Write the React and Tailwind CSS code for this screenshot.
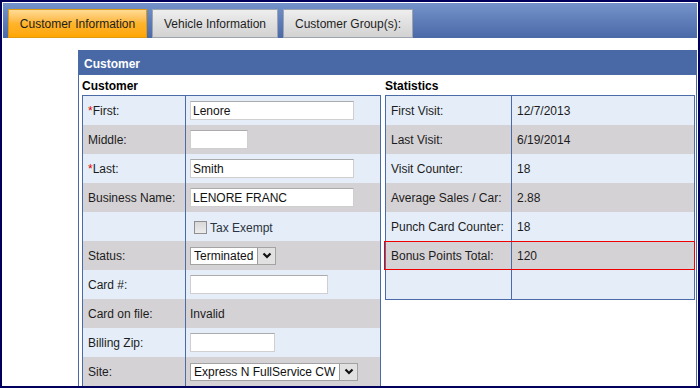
import React from "react";

const customerRows = [
  { label: "First:", req: true, kind: "input", value: "Lenore", w: "w-[164px]" },
  { label: "Middle:", kind: "input", value: "", w: "w-[58px]" },
  { label: "Last:", req: true, kind: "input", value: "Smith", w: "w-[164px]" },
  { label: "Business Name:", kind: "input", value: "LENORE FRANC", w: "w-[164px]" },
  { label: "", kind: "check", value: "Tax Exempt" },
  { label: "Status:", kind: "select", value: "Terminated", w: "w-[86px]" },
  { label: "Card #:", kind: "input", value: "", w: "w-[138px]" },
  { label: "Card on file:", kind: "text", value: "Invalid" },
  { label: "Billing Zip:", kind: "input", value: "", w: "w-[85px]" },
  { label: "Site:", kind: "select", value: "Express N FullService CW", w: "w-[168px]" },
];

const statRows = [
  ["First Visit:", "12/7/2013"],
  ["Last Visit:", "6/19/2014"],
  ["Visit Counter:", "18"],
  ["Average Sales / Car:", "2.88"],
  ["Punch Card Counter:", "18"],
  ["Bonus Points Total:", "120"],
  ["", ""],
];

function Chevron() {
  return (
    <svg width="10" height="7" viewBox="0 0 10 7">
      <path d="M1.5 1.5 L5 5 L8.5 1.5" fill="none" stroke="#111" strokeWidth="2.2" />
    </svg>
  );
}

function Select({ value, w }) {
  return (
    <div className={`${w} h-[18px] flex items-stretch border border-[#a3a3a3] bg-white`}>
      <span className="flex-1 pl-[3px] leading-[16px] whitespace-nowrap overflow-hidden text-[#111]">{value}</span>
      <span className="w-[18px] flex items-center justify-center bg-[#e1e1e1] border-l border-[#9c9c9c]">
        <Chevron />
      </span>
    </div>
  );
}

function Field({ row }) {
  if (row.kind === "input") {
    return (
      <input
        readOnly
        defaultValue={row.value}
        className={`${row.w} h-[19px] border border-[#cfcfcf] border-t-[#ababab] bg-white px-[2px] text-[12px] text-[#111] outline-none font-['Liberation_Sans',Arial,sans-serif]`}
      />
    );
  }
  if (row.kind === "select") return <Select value={row.value} w={row.w} />;
  if (row.kind === "check") {
    return (
      <div className="flex items-center pl-[4px] pt-[2px]">
        <span className="w-[13px] h-[13px] border border-[#8f8f8f] bg-gradient-to-b from-[#d8d8d8] to-[#ececec]" />
        <span className="ml-[3px] text-[#2b3340]">{row.value}</span>
      </div>
    );
  }
  return <span>{row.value}</span>;
}

function Tab({ label, active, w }) {
  return (
    <div
      className={`${w} h-[29px] flex items-center justify-center border ${
        active
          ? "border-[#e09a10] bg-gradient-to-b from-[#ffdb94] via-[#ffb42a] to-[#ffa600]"
          : "border-[#9da4ae] bg-gradient-to-b from-[#eeeeee] to-[#d2d2d2]"
      } text-[#1e1e1e]`}
    >
      {label}
    </div>
  );
}

export default function App() {
  return (
    <div className="w-[700px] h-[388px] overflow-hidden border-2 border-[#00005c] p-px bg-white font-['Liberation_Sans',Arial,sans-serif] text-[12px] text-[#1c1c1c]">
      <div className="h-[35px] flex items-end gap-[5px] pl-[5px] bg-gradient-to-b from-[#7593ca] to-[#4a69a7]">
        <Tab label="Customer Information" active w="w-[139px]" />
        <Tab label="Vehicle Information" w="w-[126px]" />
        <Tab label="Customer Group(s):" w="w-[130px]" />
      </div>

      <div className="pl-[75px] pt-[12px]">
        <div className="border-x border-[#4a6aa8] h-[340px]">
          <div className="h-[25px] bg-[#4869a6] text-white font-bold pl-[5px] pt-[2px] flex items-center">
            Customer
          </div>
          <div className="flex gap-[4px] pl-[3px] pr-[1px]">
            <div className="w-[299px]">
              <div className="h-[20px] pt-[3px] leading-[17px] font-bold text-black">Customer</div>
              <div className="border border-[#4a6aa8]">
                {customerRows.map((row, i) => (
                  <div
                    key={i}
                    className={`grid grid-cols-[103px_1fr] h-[29px] ${i % 2 ? "bg-[#d5d2d5]" : "bg-[#e5eef8]"}`}
                  >
                    <div className="border-r border-[#4a6aa8] pl-[5px] flex items-center">
                      {row.req && <span className="text-[#e00000]">*</span>}
                      {row.label}
                    </div>
                    <div className="pl-[4px] flex items-center">
                      <Field row={row} />
                    </div>
                  </div>
                ))}
              </div>
            </div>

            <div className="flex-1">
              <div className="h-[20px] pt-[3px] leading-[17px] font-bold text-black">Statistics</div>
              <div className="border border-[#4a6aa8]">
                {statRows.map(([label, value], i) => (
                  <div
                    key={i}
                    className={`relative grid grid-cols-[126px_1fr] h-[29px] ${i % 2 ? "bg-[#d5d2d5]" : "bg-[#e5eef8]"}`}
                  >
                    <div className="border-r border-[#4a6aa8] pl-[5px] flex items-center">{label}</div>
                    <div className="pl-[5px] flex items-center">{value}</div>
                    {i === 5 && (
                      <div className="absolute z-10 -left-[2px] -right-[1px] top-0 bottom-0 border border-[#ee0000] pointer-events-none" />
                    )}
                  </div>
                ))}
              </div>
            </div>
          </div>
        </div>
      </div>
    </div>
  );
}
